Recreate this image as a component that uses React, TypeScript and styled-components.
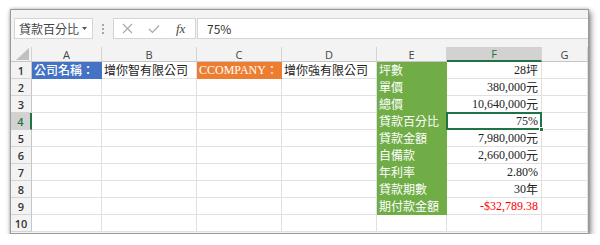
import styled, { createGlobalStyle } from 'styled-components'

const GlobalStyle = createGlobalStyle`
	html, body {
		margin: 0;
		padding: 0;
		background: #ffffff;
	}
	body {
		font-family: 'Liberation Serif', 'Noto Sans CJK TC', serif;
	}
`

const Window = styled.div`
	margin: 9px 0 0 10px;
	width: 579px;
	height: 225px;
	box-sizing: border-box;
	border: 1px solid #9a9a9a;
	background: #f3f3f3;
	box-shadow: 2px 3px 6px rgba(0, 0, 0, 0.45), 0 0 3px rgba(0, 0, 0, 0.25);
	display: flex;
	flex-direction: column;
	overflow: hidden;
`

const Toolbar = styled.div`
	height: 37px;
	box-sizing: border-box;
	padding: 8px 0 0 3px;
	display: flex;
	align-items: flex-start;
	background: #f3f3f3;
`

const NameBox = styled.div`
	width: 79px;
	height: 21px;
	box-sizing: border-box;
	border: 1px solid #d4d4d4;
	background: #ffffff;
	display: flex;
	align-items: center;
	justify-content: space-between;
	padding: 0 5px 0 4px;
	font-family: 'Noto Sans CJK TC', sans-serif;
	font-size: 12px;
	color: #444444;
`

const Dots = styled.div`
	width: 20px;
	height: 21px;
	display: flex;
	flex-direction: column;
	align-items: center;
	justify-content: center;
	gap: 2px;

	span {
		width: 2px;
		height: 2px;
		background: #a6a6a6;
	}
`

const FxBox = styled.div`
	width: 83px;
	height: 21px;
	box-sizing: border-box;
	border: 1px solid #d4d4d4;
	background: #ffffff;
	display: flex;
	align-items: center;
	padding-left: 8px;
	gap: 15px;
`

const Fx = styled.span`
	font-family: 'Liberation Serif', serif;
	font-style: italic;
	font-size: 13px;
	color: #444444;
	margin-left: 1px;
`

const FormulaInput = styled.div`
	flex: 1;
	height: 21px;
	margin-left: 1px;
	box-sizing: border-box;
	border: 1px solid #d4d4d4;
	border-right: none;
	background: #ffffff;
	display: flex;
	align-items: center;
	padding-left: 9px;
	font-family: 'Noto Sans CJK TC', sans-serif;
	font-size: 12px;
	color: #333333;
`

const Sheet = styled.div`
	display: grid;
	grid-template-columns: 21px 70px 95px 85px 95px 70px 95px 1fr;
	grid-template-rows: 15px repeat(10, 17px);
	background: #ffffff;
`

const Corner = styled.div`
	background: #f3f3f3;
	border-right: 1px solid #d4d4d4;
	border-bottom: 1px solid #c6c6c6;
	position: relative;

	&::after {
		content: '';
		position: absolute;
		right: 2px;
		bottom: 1px;
		border-style: solid;
		border-width: 0 0 12px 13px;
		border-color: transparent transparent #c0c0c0 transparent;
	}
`

const ColHead = styled.div<{ $selected?: boolean }>`
	background: ${(p) => (p.$selected ? '#d2d2d2' : '#f3f3f3')};
	border-right: 1px solid #d4d4d4;
	border-bottom: ${(p) => (p.$selected ? '2px solid #217346' : '1px solid #c6c6c6')};
	display: flex;
	align-items: center;
	justify-content: center;
	font-family: 'Open Sans', 'Liberation Sans', sans-serif;
	font-size: 11px;
	color: ${(p) => (p.$selected ? '#217346' : '#444444')};
	line-height: 1;
`

const RowHead = styled.div<{ $selected?: boolean }>`
	background: ${(p) => (p.$selected ? '#d2d2d2' : '#f3f3f3')};
	border-right: ${(p) => (p.$selected ? '2px solid #217346' : '1px solid #c6c6c6')};
	border-bottom: 1px solid #d4d4d4;
	display: flex;
	align-items: center;
	justify-content: center;
	font-family: 'Open Sans', 'Liberation Sans', sans-serif;
	font-size: 11px;
	font-weight: 600;
	color: ${(p) => (p.$selected ? '#217346' : '#333333')};
	line-height: 1;
`

const Cell = styled.div<{ $fill?: string; $right?: boolean; $color?: string; $active?: boolean }>`
	position: relative;
	box-sizing: border-box;
	background: ${(p) => p.$fill || '#ffffff'};
	border-right: 1px solid ${(p) => p.$fill || '#e1e1e1'};
	border-bottom: 1px solid ${(p) => p.$fill || '#e1e1e1'};
	display: flex;
	align-items: flex-end;
	justify-content: ${(p) => (p.$right ? 'flex-end' : 'flex-start')};
	padding: 0 3px 1px 2px;
	font-family: 'Liberation Serif', 'Noto Sans CJK TC', serif;
	font-size: 12px;
	line-height: 14px;
	white-space: nowrap;
	overflow: visible;
	color: ${(p) => p.$color || (p.$fill ? '#ffffff' : '#222222')};

	${(p) =>
		p.$active &&
		`
		&::after {
			content: '';
			position: absolute;
			left: -1px;
			top: -1px;
			right: -1px;
			bottom: -1px;
			border: 2px solid #217346;
		}
		&::before {
			content: '';
			position: absolute;
			right: -3px;
			bottom: -3px;
			width: 5px;
			height: 5px;
			background: #217346;
			border: 1px solid #ffffff;
			box-sizing: border-box;
			z-index: 1;
		}
	`}
`

const CJK = styled.span<{ $bold?: boolean }>`
	font-family: 'Noto Sans CJK TC', sans-serif;
	font-weight: ${(p) => (p.$bold ? 500 : 400)};
`

const BLUE = '#4472c4'
const ORANGE = '#ed7d31'
const GREEN = '#70ad47'

const columns = ['A', 'B', 'C', 'D', 'E', 'F', 'G']

const labels = ['坪數', '單價', '總價', '貸款百分比', '貸款金額', '自備款', '年利率', '貸款期數', '期付款金額']

const values: [string, string][] = [
	['28', '坪'],
	['380,000', '元'],
	['10,640,000', '元'],
	['75%', ''],
	['7,980,000', '元'],
	['2,660,000', '元'],
	['2.80%', ''],
	['30', '年'],
	['-$32,789.38', ''],
]

export default function App() {
	const rows = Array.from({ length: 10 }, (_, i) => i)

	return (
		<>
			<GlobalStyle />
			<Window>
				<Toolbar>
					<NameBox>
						<span>貸款百分比</span>
						<svg width="5" height="3" viewBox="0 0 5 3">
							<path d="M0 0 L5 0 L2.5 3 Z" fill="#555555" />
						</svg>
					</NameBox>
					<Dots>
						<span />
						<span />
						<span />
					</Dots>
					<FxBox>
						<svg width="11" height="11" viewBox="0 0 11 11">
							<path d="M1 1 L10 10 M10 1 L1 10" stroke="#a8a8a8" strokeWidth="1.1" fill="none" />
						</svg>
						<svg width="12" height="10" viewBox="0 0 12 10">
							<path d="M1 5 L4.5 8.5 L11 1.5" stroke="#a8a8a8" strokeWidth="1.2" fill="none" />
						</svg>
						<Fx>fx</Fx>
					</FxBox>
					<FormulaInput>75%</FormulaInput>
				</Toolbar>
				<Sheet>
					<Corner />
					{columns.map((c) => (
						<ColHead key={c} $selected={c === 'F'}>
							{c}
						</ColHead>
					))}
					{rows.map((r) => (
						<SheetRow key={r} r={r} />
					))}
				</Sheet>
			</Window>
		</>
	)
}

function SheetRow({ r }: { r: number }) {
	const label = labels[r]
	const value = values[r]
	return (
		<>
			<RowHead $selected={r === 3}>{r + 1}</RowHead>
			<Cell $fill={r === 0 ? BLUE : undefined}>{r === 0 && <CJK $bold>公司名稱：</CJK>}</Cell>
			<Cell>{r === 0 && <CJK>增你智有限公司</CJK>}</Cell>
			<Cell $fill={r === 0 ? ORANGE : undefined}>
				{r === 0 && (
					<>
						CCOMPANY<CJK>：</CJK>
					</>
				)}
			</Cell>
			<Cell>{r === 0 && <CJK>增你強有限公司</CJK>}</Cell>
			<Cell $fill={label ? GREEN : undefined}>{label && <CJK>{label}</CJK>}</Cell>
			<Cell $right $active={r === 3} $color={r === 8 ? '#ff0000' : undefined}>
				{value && (
					<>
						{value[0]}
						{value[1] && <CJK>{value[1]}</CJK>}
					</>
				)}
			</Cell>
			<Cell />
		</>
	)
}
